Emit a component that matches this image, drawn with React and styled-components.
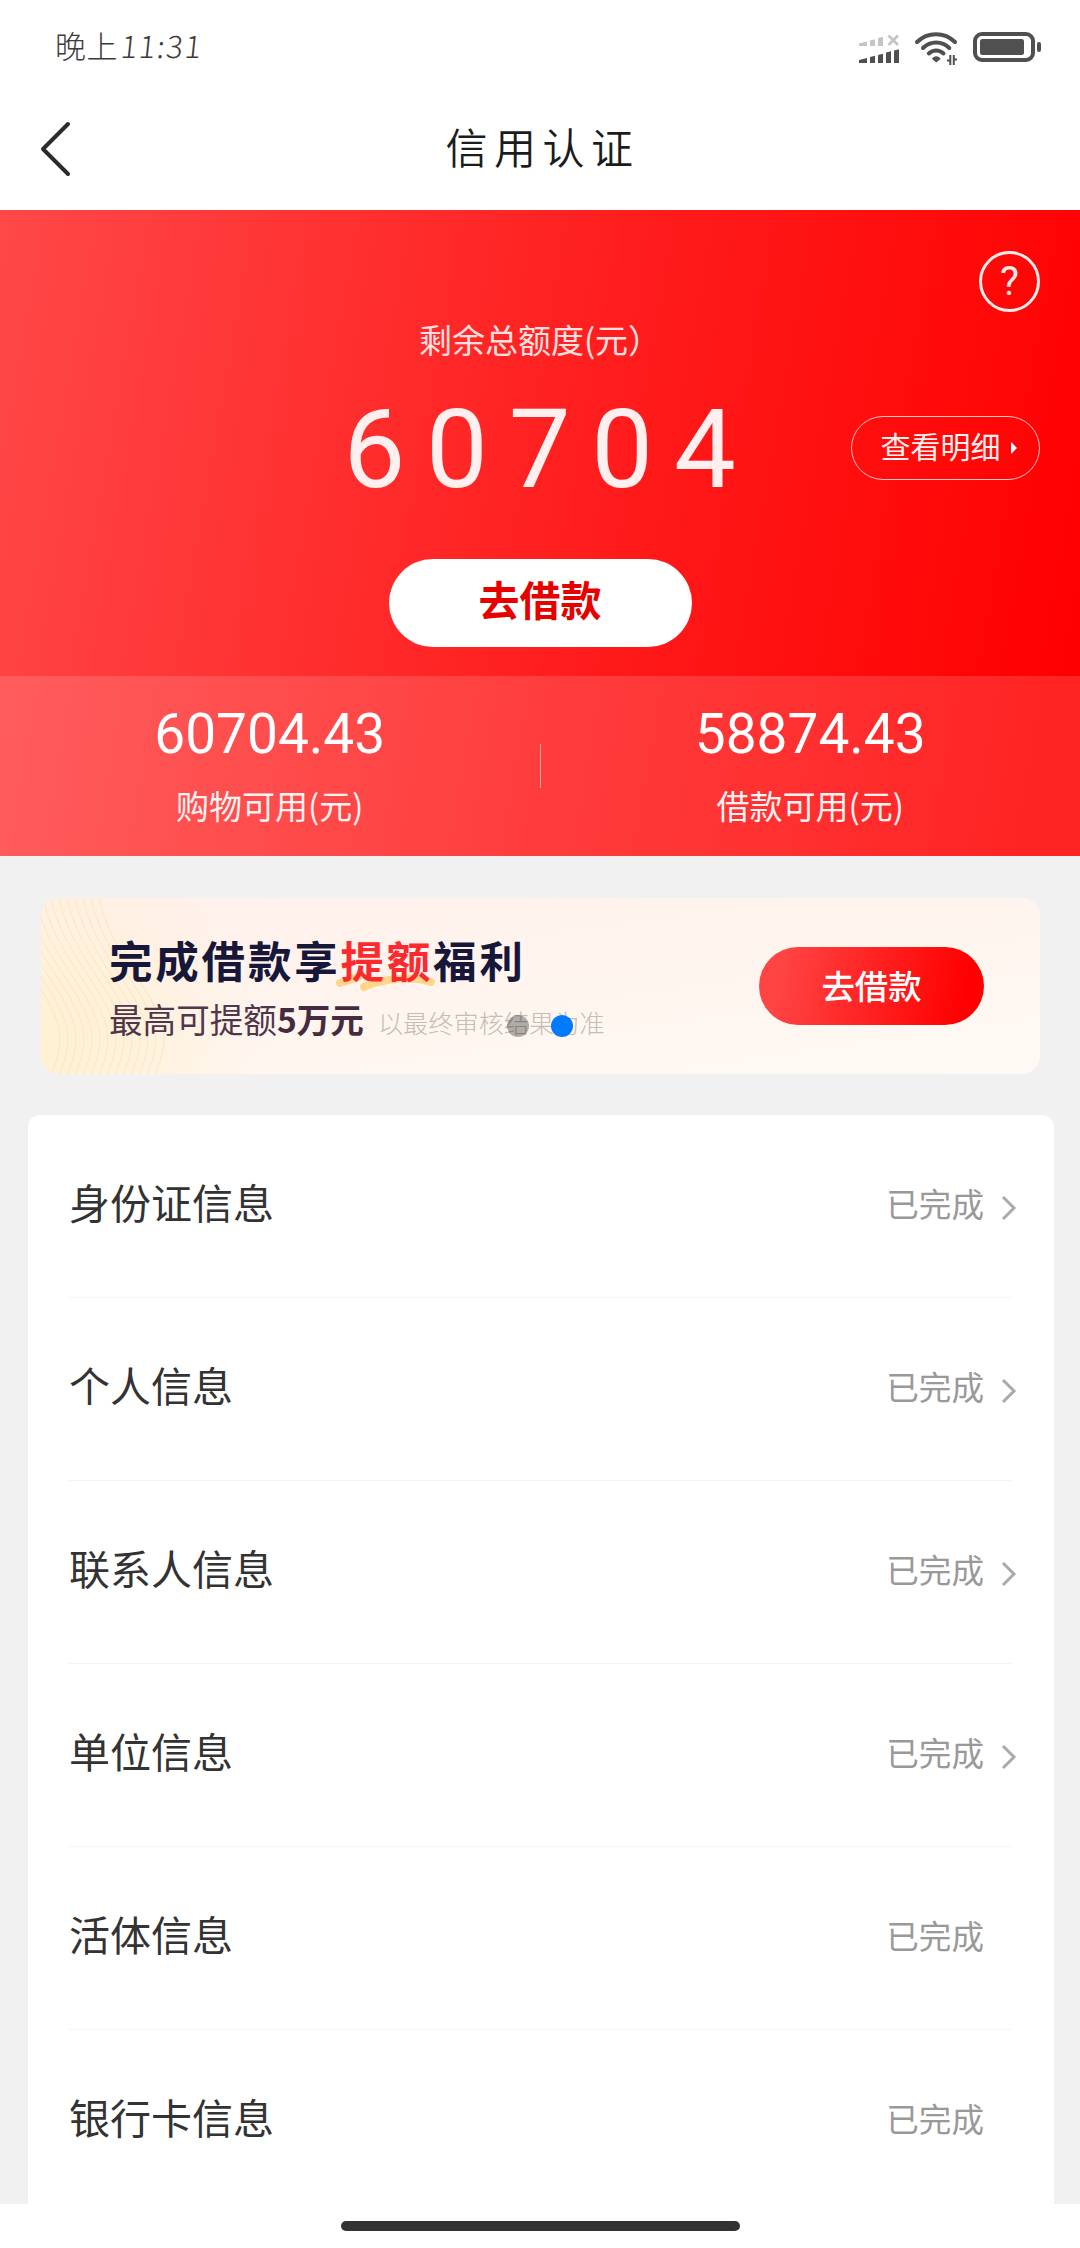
import styled, { createGlobalStyle } from 'styled-components';

const GlobalStyle = createGlobalStyle`
  * {
    box-sizing: border-box;
  }

  body {
    margin: 0;
    background: #fff;
    font-family: Roboto, "Noto Sans CJK SC", sans-serif;
  }
`;

const Page = styled.div`
  width: 1080px;
  height: 2248px;
  display: flex;
  flex-direction: column;
  overflow: hidden;
  background: #f1f1f1;
`;

const StatusBar = styled.div`
  height: 94px;
  flex: none;
  display: flex;
  justify-content: space-between;
  align-items: center;
  padding: 0 38px 0 55px;
  background: #fff;
`;

const Clock = styled.span`
  display: flex;
  align-items: baseline;
  margin-top: -4px;
  font-family: "Noto Sans CJK SC", sans-serif;
  font-size: 31px;
  font-weight: 300;
  line-height: 40px;
  letter-spacing: 0.5px;
  color: #3c3c3c;
`;

const ClockDigits = styled.span`
  display: inline-block;
  margin-left: 3px;
  transform: skewX(-6deg);
  letter-spacing: 1.6px;
`;

const StatusIcons = styled.svg`
  width: 184px;
  height: 40px;
`;

const TitleBar = styled.header`
  height: 116px;
  flex: none;
  display: grid;
  grid-template-columns: 80px 1fr 80px;
  align-items: center;
  background: #fff;
`;

const BackIcon = styled.svg`
  width: 34px;
  height: 60px;
  margin: -6px 0 0 39px;
  fill: none;
  stroke: #2b2b2b;
  stroke-width: 4;
  stroke-linecap: round;
  stroke-linejoin: round;
`;

const Title = styled.h1`
  margin: -5px 0 0;
  padding-left: 5px;
  text-align: center;
  font-size: 42px;
  font-weight: 350;
  line-height: 60px;
  letter-spacing: 6.5px;
  color: #1c1c1c;
`;

const Hero = styled.section`
  flex: none;
  background: linear-gradient(100deg, #ff4848 0%, #ff1c1c 55%, #ff0000 96%);
  color: #fff;
`;

const HeroMain = styled.div`
  height: 466px;
  display: flex;
  flex-direction: column;
`;

const HelpRow = styled.div`
  height: 105px;
  display: flex;
  justify-content: flex-end;
  padding: 41px 40px 0 0;
`;

const HelpButton = styled.button`
  width: 61px;
  height: 61px;
  flex: none;
  padding: 0;
  border: 3px solid #ffeaea;
  border-radius: 50%;
  background: none;
  color: #ffeaea;
  font-family: inherit;
  font-size: 40px;
  line-height: 52px;
`;

const HeroLabel = styled.div`
  height: 51px;
  text-align: center;
  font-size: 33px;
  line-height: 48px;
  font-family: "Noto Sans CJK SC", sans-serif;
  color: #ffe0e0;
`;

const AmountRow = styled.div`
  height: 193px;
  display: grid;
  grid-template-columns: 240px 1fr 240px;
  align-items: center;
  padding-bottom: 31px;
`;

const Amount = styled.div`
  grid-column: 2;
  padding: 5px 0 0 20px;
  text-align: center;
  font-size: 110px;
  line-height: 130px;
  letter-spacing: 20.8px;
  color: #ffefef;
`;

const DetailButton = styled.button`
  width: 189px;
  height: 64px;
  margin: 2px 40px 0 auto;
  padding: 0 0 6px 6px;
  display: flex;
  align-items: center;
  justify-content: center;
  gap: 10px;
  border: 1px solid #ffc4c4;
  border-radius: 32px;
  background: none;
  color: #fff0f0;
  font-family: "Noto Sans CJK SC", sans-serif;
  font-size: 30px;
  line-height: 40px;
`;

const Caret = styled.i`
  margin-top: 5px;
  border: 6px solid transparent;
  border-left-color: #fff;
  border-right: none;
`;

const LoanButton = styled.button`
  width: 303px;
  height: 88px;
  margin: 0 auto;
  padding: 0 0 11px;
  border: none;
  border-radius: 44px;
  background: #fff;
  color: #e60000;
  font-family: "Noto Sans CJK SC", sans-serif;
  font-size: 41px;
  font-weight: 700;
`;

const Stats = styled.div`
  height: 180px;
  display: grid;
  grid-template-columns: 1fr 1px 1fr;
  align-items: center;
  background: rgba(255, 255, 255, 0.14);
`;

const Stat = styled.div`
  text-align: center;
`;

const StatValue = styled.div`
  font-size: 55px;
  line-height: 66px;
`;

const StatLabel = styled.div`
  margin: 14px 0 3px;
  font-family: "Noto Sans CJK SC", sans-serif;
  font-size: 33px;
  line-height: 48px;
  color: #fff2f2;
`;

const StatDivider = styled.div`
  height: 44px;
  background: #ff9c96;
`;

const Banner = styled.section`
  position: relative;
  width: 999px;
  height: 176px;
  flex: none;
  margin: 42px 0 0 41px;
  padding: 0 56px 0 68px;
  display: flex;
  justify-content: space-between;
  border-radius: 18px;
  overflow: hidden;
  background:
    radial-gradient(circle at 0% 85%, rgba(255, 240, 205, 0.9), transparent 22%),
    linear-gradient(172deg, #fff0ec 0%, #fff4ee 45%, #fffaf5 100%);
  font-family: "Noto Sans CJK SC", sans-serif;
`;

const Waves = styled.svg`
  position: absolute;
  left: 0;
  top: 0;
  width: 150px;
  height: 177px;
  fill: none;
  stroke: #fbe8c4;
  stroke-width: 1.1;
`;

const BannerText = styled.div`
  position: relative;
  padding-top: 32px;
`;

const BannerTitle = styled.div`
  font-size: 43.5px;
  font-weight: 700;
  line-height: 60px;
  letter-spacing: 2.8px;
  color: #17173a;
  white-space: nowrap;
`;

const Accent = styled.span`
  position: relative;
  z-index: 0;
  color: #fb2a2f;
`;

const Brush = styled.svg`
  position: absolute;
  z-index: -1;
  left: -6px;
  bottom: -1px;
  width: 102px;
  height: 20px;
  fill: none;
  stroke: #ffd68a;
  stroke-width: 8;
  stroke-linecap: round;
  stroke-linejoin: round;
`;

const BannerSub = styled.div`
  display: flex;
  align-items: baseline;
  font-size: 33.6px;
  line-height: 57px;
  color: #50364a;
  white-space: nowrap;
`;

const Strong = styled.b`
  font-weight: 700;
  color: #452b40;
`;

const Note = styled.span`
  margin-left: 14px;
  font-size: 25.2px;
  font-weight: 300;
  color: #c4bdb8;
`;

const Dots = styled.div`
  position: absolute;
  left: 466px;
  top: 117px;
  display: flex;
  gap: 22px;
`;

const Dot = styled.i`
  width: 22px;
  height: 22px;
  border-radius: 50%;
  background: ${({ $active }) => ($active ? '#007aff' : 'rgba(0, 0, 0, 0.3)')};
`;

const BannerButton = styled.button`
  width: 225px;
  height: 78px;
  margin-top: 49px;
  padding: 0 0 4px;
  border: none;
  border-radius: 39px;
  background: linear-gradient(100deg, #ff4444 10%, #ff0000 90%);
  color: #fff;
  font-family: inherit;
  font-size: 33.4px;
  font-weight: 500;
`;

const List = styled.ul`
  width: 1026px;
  flex: 1;
  min-height: 0;
  overflow: hidden;
  margin: 41px 0 0 28px;
  padding: 0 43px 0 41px;
  list-style: none;
  border-radius: 12px 12px 0 0;
  background: #fff;
  font-family: "Noto Sans CJK SC", sans-serif;
`;

const Item = styled.li`
  height: 183px;
  display: flex;
  align-items: center;
  padding-bottom: 5px;
  border-bottom: 1px solid #f4f4f4;

  &:last-child {
    padding-bottom: 7px;
    border-bottom: none;
  }
`;

const ItemName = styled.span`
  flex: 1;
  margin-top: -5px;
  font-size: 41px;
  line-height: 60px;
  color: #333;
`;

const ItemState = styled.span`
  margin: -1px 27px 0 0;
  font-size: 32.6px;
  line-height: 48px;
  color: #999;
`;

const ItemArrow = styled.svg`
  width: 16px;
  height: 26px;
  margin: 8px -6px 0 -10px;
  fill: none;
  stroke: #aaa;
  stroke-width: 3;
`;

const HomeArea = styled.footer`
  height: 44px;
  flex: none;
  display: flex;
  justify-content: center;
  padding-top: 17px;
  background: #fff;
`;

const HomeBar = styled.div`
  width: 399px;
  height: 10px;
  border-radius: 5px;
  background: #333;
`;

const items = [
  { name: '身份证信息', link: true },
  { name: '个人信息', link: true },
  { name: '联系人信息', link: true },
  { name: '单位信息', link: true },
  { name: '活体信息', link: false },
  { name: '银行卡信息', link: false },
];

const waveOffsets = [-104, -96, -88, -80, -72, -64, -56, -48, -40, -32, -24, -16, -8, 0];

function DeviceIcons() {
  return (
    <StatusIcons viewBox="858 27 184 40">
      {/* sim 1, no service */}
      <g fill="#c4c4c4">
        <path d="M859 43.5l8-2v4.5h-8z" />
        <path d="M870 40.5l5-1.3V46h-5z" />
        <path d="M878 38l5-1.2V46h-5z" />
      </g>
      <path d="M888.5 35.5l9.5 9.5M898 35.5l-9.5 9.5" stroke="#c4c4c4" strokeWidth="2.6" />
      {/* sim 2 */}
      <g fill="#505050">
        <path d="M859 60l8-2v5h-8z" />
        <path d="M870 57l5-1.3V63h-5z" />
        <path d="M878 55l5-1.3V63h-5z" />
        <path d="M886 52.6l5-1.3V63h-5z" />
        <path d="M894 50.6l5-1.3V63h-5z" />
      </g>
      {/* wifi */}
      <g fill="none" stroke="#505050" strokeWidth="4" strokeLinecap="round">
        <path d="M917 42c10.5-10.5 27.5-10.5 38 0" />
        <path d="M923 48c7.3-7.3 19-7.3 26.3 0" />
        <path d="M928.8 53.5c4.3-4 10.4-4 14.7 0" />
      </g>
      <path d="M932 59c1.5-3.8 7-3.8 8.5 0l-4.2 3.5z" fill="#505050" />
      <path d="M950.3 55v10M947 60.500l3.300 0M953.800 65V55M957 59.500l-3.200 0" stroke="#505050" strokeWidth="2" fill="none" />
      {/* battery */}
      <rect x="975" y="34" width="58" height="26" rx="7" fill="none" stroke="#505050" strokeWidth="4" />
      <rect x="980" y="39" width="44" height="16" rx="2.5" fill="#505050" />
      <rect x="1037" y="42" width="4" height="10" rx="2" fill="#505050" />
    </StatusIcons>
  );
}

function App() {
  return (
    <Page>
      <GlobalStyle />
      <StatusBar>
        <Clock>
          晚上<ClockDigits>11:31</ClockDigits>
        </Clock>
        <DeviceIcons />
      </StatusBar>

      <TitleBar>
        <BackIcon viewBox="0 0 34 60">
          <path d="M29 5L4 30l25 25" />
        </BackIcon>
        <Title>信用认证</Title>
      </TitleBar>

      <Hero>
        <HeroMain>
          <HelpRow>
            <HelpButton>?</HelpButton>
          </HelpRow>
          <HeroLabel>剩余总额度(元）</HeroLabel>
          <AmountRow>
            <Amount>60704</Amount>
            <DetailButton>
              查看明细
              <Caret />
            </DetailButton>
          </AmountRow>
          <LoanButton>去借款</LoanButton>
        </HeroMain>
        <Stats>
          <Stat>
            <StatValue>60704.43</StatValue>
            <StatLabel>购物可用(元)</StatLabel>
          </Stat>
          <StatDivider />
          <Stat>
            <StatValue>58874.43</StatValue>
            <StatLabel>借款可用(元)</StatLabel>
          </Stat>
        </Stats>
      </Hero>

      <Banner>
        <Waves viewBox="0 0 150 177">
          {waveOffsets.map((x) => (
            <path key={x} d={`M${x + 58} 0c14 58 44 78 60 118c9 22 4 40-4 59`} />
          ))}
        </Waves>
        <BannerText>
          <BannerTitle>
            完成借款享
            <Accent>
              提额
              <Brush viewBox="0 0 102 20">
                <path d="M5 11l18-6M29 15c20-9 50-11 67-5" />
              </Brush>
            </Accent>
            福利
          </BannerTitle>
          <BannerSub>
            最高可提额<Strong>5万元</Strong>
            <Note>以最终审核结果为准</Note>
          </BannerSub>
        </BannerText>
        <BannerButton>去借款</BannerButton>
        <Dots>
          <Dot />
          <Dot $active />
        </Dots>
      </Banner>

      <List>
        {items.map((item) => (
          <Item key={item.name}>
            <ItemName>{item.name}</ItemName>
            <ItemState>已完成</ItemState>
            {item.link && (
              <ItemArrow viewBox="0 0 16 26">
                <path d="M2 2l11 11L2 24" />
              </ItemArrow>
            )}
          </Item>
        ))}
      </List>

      <HomeArea>
        <HomeBar />
      </HomeArea>
    </Page>
  );
}

export default App;
